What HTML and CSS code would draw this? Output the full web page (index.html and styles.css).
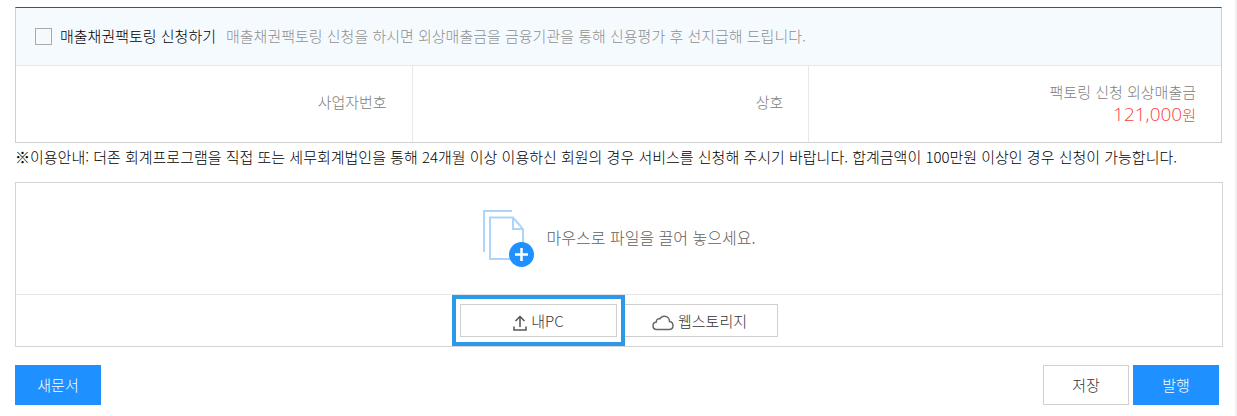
FILE: index.html
```html
<!DOCTYPE html>
<html lang="ko">
<head>
  <meta charset="UTF-8" />
  <meta name="viewport" content="width=device-width, initial-scale=1.0"/>
  <title>매출채권팩토링 신청</title>
  <link rel="stylesheet" href="styles.css">
</head>
<body>
  <main class="page">
    <section class="factoring">
      <div class="factoring-head">
        <input type="checkbox" id="factoring" name="factoring" />
        <label for="factoring">매출채권팩토링 신청하기</label>
        <p>매출채권팩토링 신청을 하시면 외상매출금을 금융기관을 통해 신용평가 후 선지급해 드립니다.</p>
      </div>
      <div class="factoring-body">
        <div class="cell">사업자번호</div>
        <div class="cell">상호</div>
        <div class="cell">
          팩토링 신청 외상매출금
          <strong class="amount">121,000<span>원</span></strong>
        </div>
      </div>
    </section>
    <p class="notice">※이용안내: 더존 회계프로그램을 직접 또는 세무회계법인을 통해 24개월 이상 이용하신 회원의 경우 서비스를 신청해 주시기 바랍니다. 합계금액이 100만원 이상인 경우 신청이 가능합니다.</p>

    <section class="upload">
      <div class="drop-area">
        <svg width="52" height="58" viewBox="0 0 52 58" fill="none">
          <path d="M1 42V1h28" stroke="#add5fa" stroke-width="2"/>
          <path d="M7 7.500h23l10 11.500v30H7zM30 7.500V19h10" stroke="#add5fa" stroke-width="2"/>
          <circle cx="38.500" cy="44.500" r="12.500" fill="#1e90ff"/>
          <path d="M32 44.500h13M38.500 38v13" stroke="#fff" stroke-width="2.500"/>
        </svg>
        <p>마우스로 파일을 끌어 놓으세요.</p>
      </div>
      <div class="upload-buttons">
        <button type="button" class="file-btn selected">
          <svg width="14" height="16" viewBox="0 0 14 16" fill="none" stroke="#555" stroke-width="1.500">
            <path d="M7 12V1.500M2.500 6L7 1.500 11.500 6M1 11.500v3.500h12v-3.500"/>
          </svg>
          내PC
        </button>
        <button type="button" class="file-btn">
          <svg width="22" height="16" viewBox="0 0 22 16" fill="none" stroke="#666" stroke-width="1.500">
            <path d="M5 14.500C2.500 14.500 1 12.800 1 10.700 1 8.600 2.500 7.200 4.300 7 4.300 4 6.500 3.500 7.800 3.800 9 1.800 10.800 1.200 12.500 1.200 15.500 1.200 17.500 3.400 17.500 6.500 19.600 6.800 21 8.300 21 10.500 21 12.900 19.300 14.500 17 14.500Z"/>
          </svg>
          웹스토리지
        </button>
      </div>
    </section>

    <div class="actions">
      <button type="button" class="btn primary">새문서</button>
      <div class="actions-right">
        <button type="button" class="btn">저장</button>
        <button type="submit" class="btn primary">발행</button>
      </div>
    </div>
  </main>
</body>
</html>
```
FILE: styles.css
```css
* {
  margin: 0;
  padding: 0;
  box-sizing: border-box;
}

body {
  font-family: 'Noto Sans CJK KR', sans-serif;
  font-size: 15px;
  font-weight: 300;
  line-height: 24px;
  color: #000;
  background: #fff;
}

button {
  font: inherit;
  cursor: pointer;
}

.page {
  min-height: 100vh;
  padding: 7px 12px 0 15px;
  border-right: 2px solid #f1f1f1;
}

.factoring {
  margin-right: 1px;
  border: 1px solid #d0d0d0;
  border-top-color: #505050;
}

.factoring-head {
  display: flex;
  align-items: center;
  padding: 16px 19px 17px;
  background: #f5faff;
  border-bottom: 1px solid #e4e9ed;
}

.factoring-head input {
  appearance: none;
  width: 17px;
  height: 17px;
  margin-right: 8px;
  background: #f5f9fc;
  border: 1px solid #aaa;
}

.factoring-head input:checked {
  background: #1e90ff;
}

.factoring-head label {
  margin-right: 10px;
}

.factoring-head p {
  color: #909090;
}

.factoring-body {
  display: grid;
  grid-template-columns: 396fr 397fr 413fr;
}

.cell {
  display: flex;
  flex-direction: column;
  align-items: flex-end;
  justify-content: center;
  min-height: 76px;
  padding: 0 25px 4px;
  color: #808080;
}

.cell + .cell {
  border-left: 1px solid #e8e8e8;
}

.amount {
  font-family: 'Open Sans', 'Noto Sans CJK KR', sans-serif;
  font-size: 19px;
  font-weight: 300;
  line-height: 20px;
  color: #ff4040;
}

.amount span {
  font-size: 15px;
}

.notice {
  margin: 2px 0 13px;
}

.upload {
  border: 1px solid #d4d4d4;
}

.drop-area {
  display: flex;
  align-items: center;
  justify-content: center;
  gap: 12px;
  min-height: 111px;
  font-size: 16px;
  color: #606060;
}

.drop-area p {
  padding-bottom: 4px;
}

.upload-buttons {
  display: flex;
  justify-content: center;
  gap: 4px;
  padding: 9px 0;
  border-top: 1px solid #e6e6e6;
}

.file-btn {
  display: flex;
  align-items: center;
  justify-content: center;
  gap: 4px;
  position: relative;
  width: 157px;
  height: 33px;
  color: #333;
  background: #fff;
  border: 1px solid #d0d0d0;
}

.file-btn svg {
  margin-top: 4px;
}

/* blue frame round the chosen source */
.selected::after {
  content: "";
  position: absolute;
  inset: -10px -9px;
  z-index: 1;
  border: 4px solid #2b98e8;
}

.actions {
  display: flex;
  justify-content: space-between;
  padding: 18px 4px 11px 0;
}

.actions-right {
  display: flex;
  gap: 4px;
}

.btn {
  width: 86px;
  height: 40px;
  color: #333;
  background: #fff;
  border: 1px solid #d0d0d0;
}

.primary {
  color: #fff;
  background: #1e90ff;
  border-color: #1e90ff;
}
```
